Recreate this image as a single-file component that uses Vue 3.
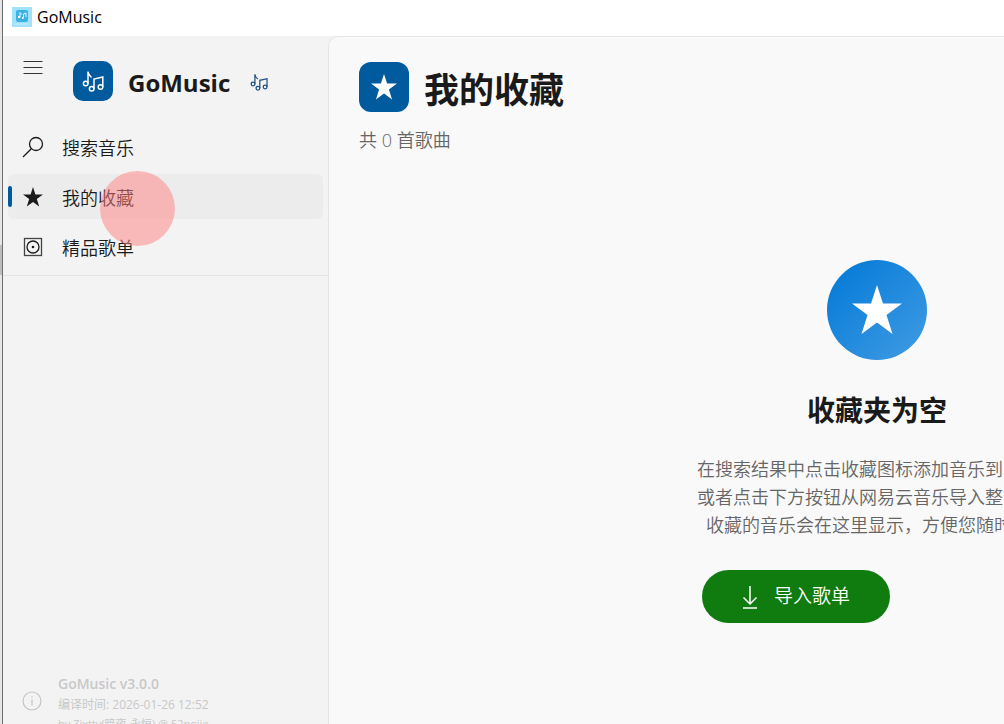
<script setup>
const nav = [
  { id: 'search', label: '搜索音乐' },
  { id: 'favorites', label: '我的收藏' },
  { id: 'playlists', label: '精品歌单' },
]
const active = 'favorites'
const starPoints = '50,0 62,37 100,37 69,60 81,98 50,75 19,98 31,60 0,37 38,37'
</script>

<template>
  <div class="desktop">
    <div class="edge" aria-hidden="true"><i></i></div>
    <div class="window">
      <header class="titlebar">
        <svg class="app-icon" viewBox="0 0 20 20" aria-hidden="true">
          <rect width="20" height="20" fill="#a0e2fb" />
          <rect x="4" y="3" width="12" height="12" rx="2" fill="#3db0e6" />
          <path d="M8 10.500V5.500l1.500 2M11.500 10.500V7l2.500-1v4" fill="none" stroke="#fff" stroke-width=".9" />
          <circle cx="7" cy="10" r="1.200" fill="#fff" />
          <circle cx="10.800" cy="11" r="1" fill="#fff" />
          <path d="M3 17h14" stroke="#d3f1fd" stroke-dasharray="1.500 .5" />
        </svg>
        <span>GoMusic</span>
      </header>
      <div class="body">
        <aside class="sidebar">
          <div class="top">
            <div class="brand-row">
              <button class="menu" aria-label="菜单">
                <svg width="20" height="16" viewBox="0 0 20 16"><path d="M.5 1.500h19M.5 7.500h19M.5 13.500h19" stroke="#333" stroke-width="1.200" /></svg>
              </button>
              <span class="logo">
                <svg width="22" height="22" viewBox="0 0 22 22"><use href="#notes" /></svg>
              </span>
              <strong class="brand">GoMusic</strong>
              <svg class="mini" width="18" height="18" viewBox="0 0 22 22"><use href="#notes" /></svg>
              <svg class="defs" width="0" height="0" aria-hidden="true">
                <defs>
                  <g id="notes" fill="none" stroke="currentColor" stroke-width="1.500">
                    <circle cx="3.700" cy="13.500" r="2.300" />
                    <path d="M6 13.500V1.500Q6.300 5 9.500 7.500" />
                    <circle cx="9.700" cy="18.700" r="2.300" />
                    <circle cx="18.500" cy="17" r="2.300" />
                    <path d="M12 18.700V9L20.800 7v10" />
                  </g>
                </defs>
              </svg>
            </div>
            <nav>
              <button v-for="n in nav" :key="n.id" class="item" :class="{ on: n.id === active }">
                <svg v-if="n.id === 'search'" width="22" height="22" viewBox="0 0 22 22"><circle cx="14" cy="8" r="6.500" fill="none" stroke="#1a1a1a" stroke-width="1.300" /><path d="M9.300 12.700L1 21" stroke="#1a1a1a" stroke-width="1.300" /></svg>
                <svg v-else-if="n.id === 'favorites'" width="22" height="22" viewBox="-5 -5 110 110"><polygon :points="starPoints" fill="#1a1a1a" /></svg>
                <svg v-else width="22" height="22" viewBox="0 0 22 22" fill="none" stroke="#444"><rect x="2.500" y="2.500" width="17" height="17" stroke-width="1.300" /><circle cx="11" cy="11" r="6" stroke="#1a1a1a" stroke-width="1.300" /><circle cx="11" cy="11" r="1.300" fill="#1a1a1a" stroke="none" /></svg>
                <span>{{ n.label }}</span>
              </button>
            </nav>
          </div>
          <footer class="about">
            <svg width="20" height="20" viewBox="0 0 20 20" fill="none" stroke="#c4c4c4"><circle cx="10" cy="10" r="9" stroke-width="1.200" /><path d="M10 8.500v6M10 5.500v1.300" stroke-width="1.200" /></svg>
            <div>
              <b>GoMusic v3.0.0</b>
              <p>编译时间: 2026-01-26 12:52</p>
              <p class="author">by Zixtty(暗夜-永恒) @ 52pojie</p>
            </div>
          </footer>
        </aside>
        <main class="main">
          <div class="page">
            <div class="heading">
              <span class="badge"><svg width="26" height="26" viewBox="0 0 100 100"><polygon :points="starPoints" fill="#fff" /></svg></span>
              <h1>我的收藏</h1>
            </div>
            <p class="count">共 0 首歌曲</p>
            <section class="empty">
              <span class="disc"><svg width="50" height="50" viewBox="0 0 100 100"><polygon :points="starPoints" fill="#fff" /></svg></span>
              <h2>收藏夹为空</h2>
              <p>在搜索结果中点击收藏图标添加音乐到收藏夹<br />或者点击下方按钮从网易云音乐导入整个歌单<br />收藏的音乐会在这里显示，方便您随时欣赏</p>
              <button class="import">
                <svg width="16" height="24" viewBox="0 0 16 24" fill="none" stroke="#fff" stroke-width="1.500"><path d="M8 1v18M1.500 12.500L8 19l6.500-6.500M1 23h14" /></svg>
                <span>导入歌单</span>
              </button>
            </section>
          </div>
        </main>
      </div>
    </div>
    <span class="pointer" aria-hidden="true"></span>
  </div>
</template>

<style>
body { overflow: hidden; }
</style>
<style scoped>
* { box-sizing: border-box; }
.desktop { position: relative; display: flex; height: 100vh; overflow: hidden; color: #1a1a1a; font-family: "Open Sans", "Noto Sans CJK SC", sans-serif; font-size: 18px; }
h1, h2, p { margin: 0; }
button { border: 0; padding: 0; background: none; font: inherit; color: inherit; }
svg { display: block; flex: none; }
.edge { flex: none; width: 3px; background: #e6e6e6; border-right: 1px solid #6e6e6e; padding-top: 245px; }
.edge i { display: block; height: 30px; background: #bdbdbd; }
.window { flex: 1; min-width: 0; display: flex; flex-direction: column; background: #f3f3f3; }
.titlebar { flex: none; height: 36px; display: flex; align-items: center; gap: 5px; padding: 0 0 2px 9px; background: #fff; color: #000; font-size: 16px; }
.app-icon { width: 20px; height: 20px; }
.body { flex: 1; min-height: 0; display: flex; }
.sidebar { flex: none; width: 325px; display: flex; flex-direction: column; justify-content: space-between; overflow: hidden; }
.top { height: 240px; flex: none; border-bottom: 1px solid #e3e3e3; }
.brand-row { display: flex; align-items: center; height: 90px; padding-left: 20px; }
.menu { align-self: flex-start; padding-top: 24px; margin-right: 30px; }
.logo { width: 40px; height: 40px; border-radius: 10px; background: #005a9e; color: #fff; display: grid; place-items: center; }
.brand { margin: 4px 20px 0 15px; font-size: 24px; line-height: 34px; }
.mini { margin-top: 2px; color: #1b4f82; }
.defs { position: absolute; }
nav { display: flex; flex-direction: column; gap: 5px; padding: 0 5px; margin-top: -2px; }
.item { position: relative; display: flex; align-items: center; gap: 18px; height: 45px; padding-left: 14px; border-radius: 6px; text-align: left; font-weight: 350; }
.item.on { background: #ececec; }
.item.on::before { content: ""; position: absolute; left: 0; top: 12px; width: 4px; height: 21px; border-radius: 2px; background: #005a9e; }
.about { display: flex; align-items: flex-start; gap: 16px; padding: 1px 0 0 19px; height: 52px; color: #c8c8c8; font-size: 12px; line-height: 20px; white-space: nowrap; }
.about svg { margin-top: 18px; }
.about b { display: block; font-size: 14px; line-height: 22px; font-weight: 600; }
.author { font-size: 11px; line-height: 17px; }
.main { flex: 1; min-width: 0; overflow: hidden; background: #f9f9f9; border: solid #e5e5e5; border-width: 1px 0 0 1px; border-top-left-radius: 10px; }
.page { min-width: 1096px; padding: 25px 30px; }
.heading { display: flex; align-items: center; gap: 15px; height: 50px; }
.badge { width: 50px; height: 50px; border-radius: 12px; background: #005a9e; display: grid; place-items: center; }
h1 { padding-top: 6px; font-size: 35px; line-height: 50px; }
.count { margin-top: 15px; line-height: 26px; font-weight: 350; color: #666; }
.empty { width: 350px; margin: 107px auto 0; display: flex; flex-direction: column; align-items: center; }
.disc { width: 100px; height: 100px; border-radius: 50%; background: linear-gradient(135deg, #0078d7, #429ce3); display: grid; place-items: center; }
h2 { margin-top: 30px; font-size: 28px; line-height: 40px; }
.empty p { margin-top: 25px; font-size: 18px; line-height: 28px; font-weight: 350; color: #666; text-align: center; white-space: nowrap; }
.import { align-self: flex-start; display: flex; align-items: center; justify-content: center; gap: 16px; width: 188px; height: 53px; margin-top: 31px; border-radius: 27px; background: #107c10; color: #fff; font-size: 19px; line-height: 26px; font-weight: 350; }
.import span { padding-bottom: 2px; }
.pointer { position: absolute; left: 100px; top: 171px; width: 75px; height: 75px; border-radius: 50%; background: rgba(255, 128, 128, .5); }
</style>
